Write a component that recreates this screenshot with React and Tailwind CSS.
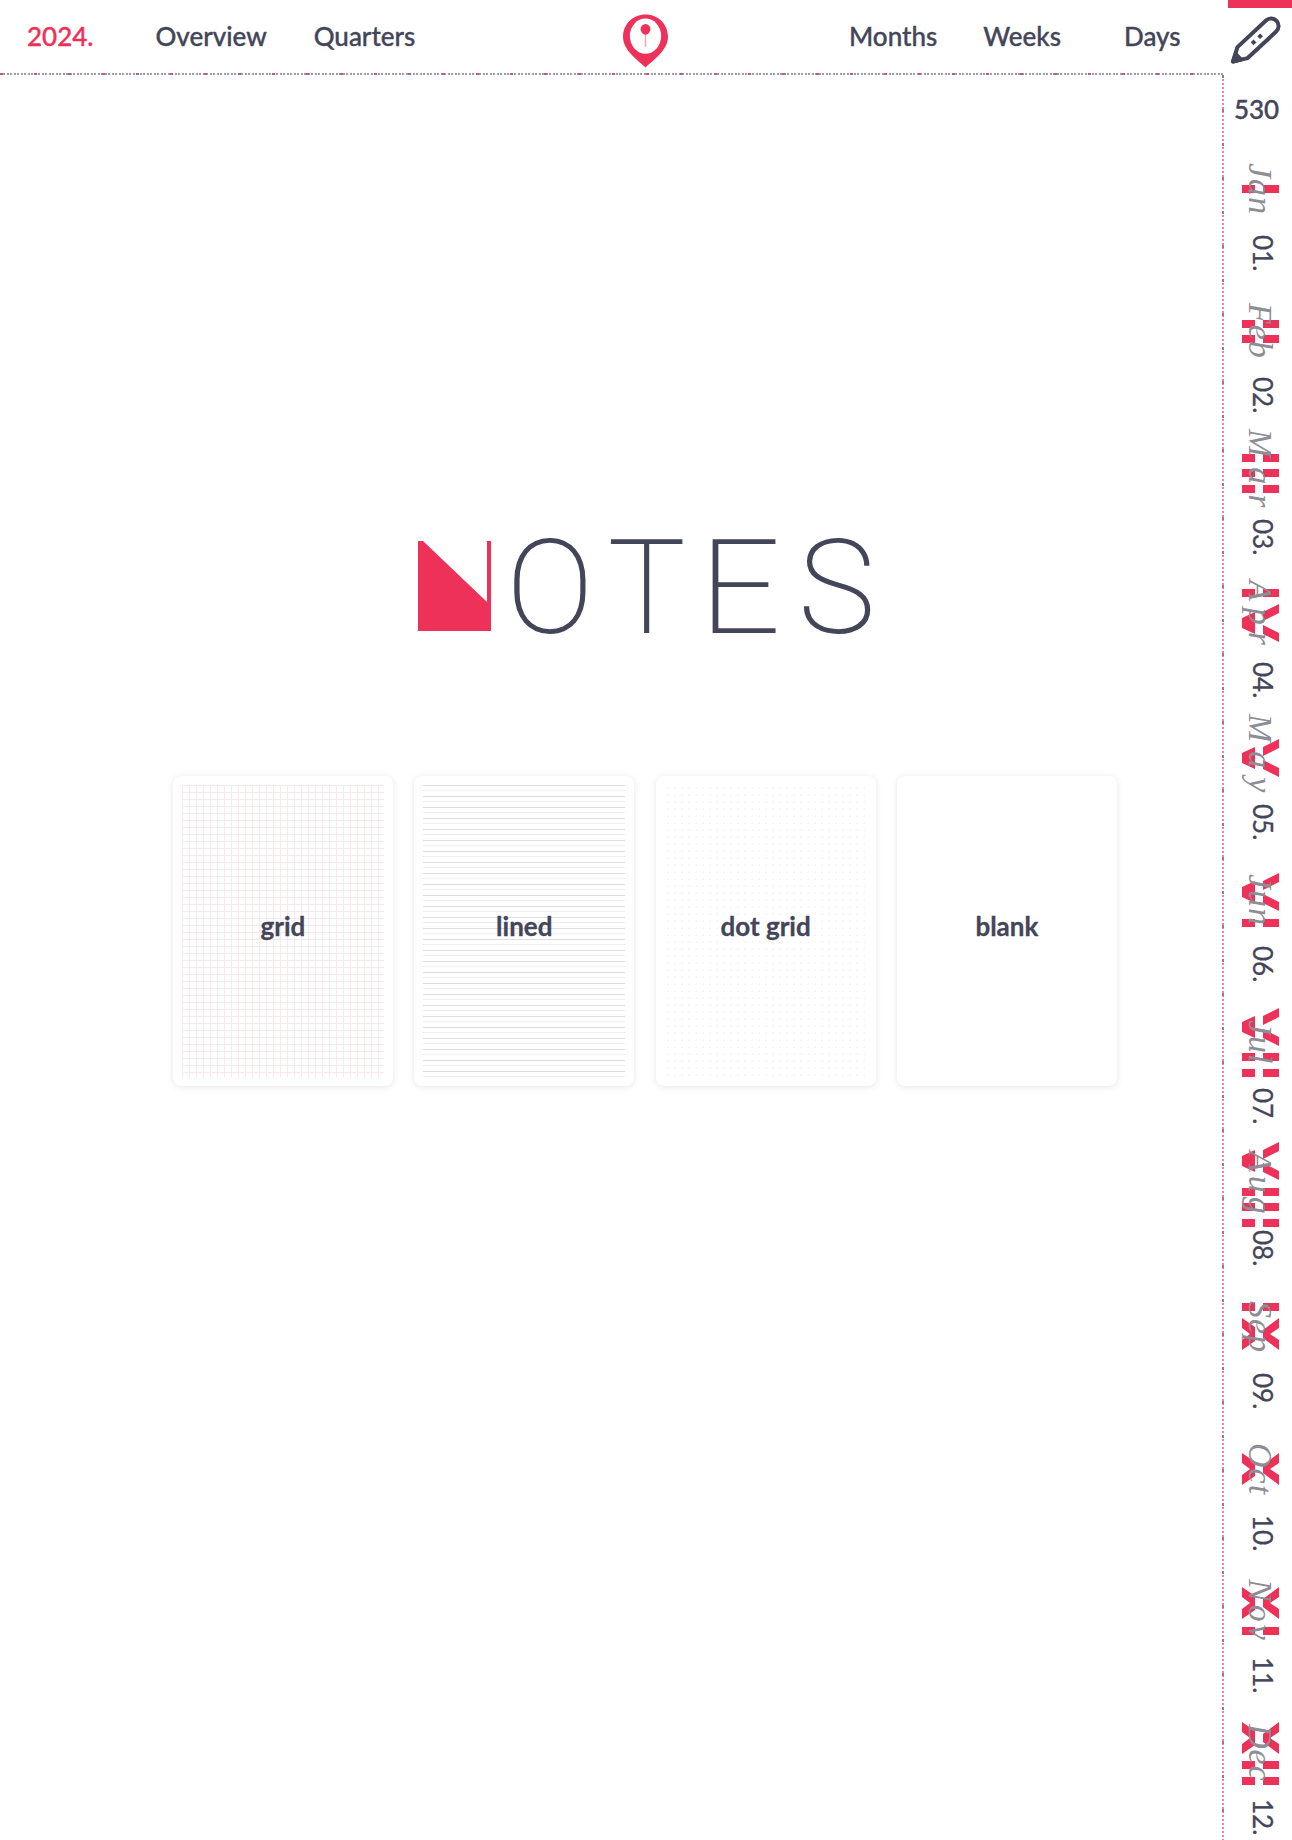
const dark = '#434559';

const months = [
  { name: 'Jan', num: '01.', roman: ['I'], script: 'tracking-[1px]' },
  { name: 'Feb', num: '02.', roman: ['I', 'I'], script: 'tracking-[1px]' },
  { name: 'Mar', num: '03.', roman: ['I', 'I', 'I'], script: 'tracking-[10px]' },
  { name: 'Apr', num: '04.', roman: ['I', 'V'], script: 'tracking-[7px]' },
  { name: 'May', num: '05.', roman: ['V'], script: 'tracking-[9px]' },
  { name: 'Jun', num: '06.', roman: ['V', 'I'], script: 'tracking-[1px]' },
  { name: 'Jul', num: '07.', roman: ['V', 'I', 'I'], script: 'tracking-[1px]' },
  { name: 'Aug', num: '08.', roman: ['V', 'I', 'I', 'I'], script: 'tracking-[4px]' },
  { name: 'Sep', num: '09.', roman: ['I', 'X'], script: 'tracking-[1px]' },
  { name: 'Oct', num: '10.', roman: ['X'], script: 'tracking-[1px]' },
  { name: 'Nov', num: '11.', roman: ['X', 'I'], script: 'tracking-[3px]' },
  { name: 'Dec', num: '12.', roman: ['X', 'I', 'I'], script: 'tracking-[1px]' },
];

function RomanPiece({ kind }) {
  if (kind === 'I') {
    return (
      <svg width="37" height="8" viewBox="0 0 37 8" className="block fill-[#ee3158]">
        <rect x="0" y="0" width="13" height="8" />
        <rect x="21" y="0" width="16" height="8" />
      </svg>
    );
  }
  if (kind === 'V') {
    return (
      <svg width="37" height="38" viewBox="0 0 37 38" className="block fill-[#ee3158]">
        <polygon points="21,8 37,0 37,9 21,17" />
        <polygon points="21,21 37,29 37,38 21,30" />
        <polygon points="0,14 13,8 13,30 0,24" />
      </svg>
    );
  }
  return (
    <svg width="37" height="32" viewBox="0 0 37 32" className="block fill-[#ee3158]">
      <polygon points="0,0 13,9 13,23 0,32 0,22 8,16 0,10" />
      <polygon points="37,0 21,12 21,20 37,32 37,22 28,16 37,10" />
    </svg>
  );
}

function MonthRow({ m }) {
  return (
    <div className="h-[142.2px] flex flex-col items-center pl-[4px]">
      <div className="relative mt-[22.5px] h-[100px] w-full flex items-center justify-center">
        <div className="flex flex-col gap-[7.5px]">
          {m.roman.map((r, i) => <RomanPiece key={i} kind={r} />)}
        </div>
        <span className={`absolute inset-0 flex items-center justify-center [writing-mode:vertical-rl] italic font-['Liberation_Serif',serif] text-[34px] leading-none text-[#8d8d95] ${m.script}`}>
          {m.name}
        </span>
      </div>
      <div className="h-[18px] mt-[8.5px] ml-[6px] flex items-center justify-center text-[26px] leading-none text-[#434559] [-webkit-text-stroke-width:0.3px] [writing-mode:vertical-rl]">
        {m.num}
      </div>
    </div>
  );
}

function Pin() {
  return (
    <svg width="45" height="54" viewBox="0 0 46 54" className="block">
      <path d="M23 0C36 0 46 10 46 23C46 36 31 47 23 54C15 47 0 36 0 23C0 10 10 0 23 0Z" fill="#ee3158" />
      <ellipse cx="23" cy="22" rx="16" ry="18" fill="#fff" />
      <line x1="23" y1="18" x2="23" y2="33" stroke="#f6a3b5" strokeWidth="1.5" />
      <ellipse cx="23" cy="15" rx="5" ry="5.5" fill="#ee3158" />
    </svg>
  );
}

function Pencil() {
  return (
    <svg width="50" height="47" viewBox="0 0 50 47" className="block overflow-visible">
      <g transform="rotate(-43 25 24)" fill="none" stroke={dark} strokeWidth="4" strokeLinejoin="round">
        <path d="M-5 24L8 16.5H47a7.5 7.5 0 0 1 0 15H8Z" />
        <path d="M-5 24L2 20.2V27.8Z" fill={dark} />
        <line x1="21" y1="24" x2="25" y2="24" strokeWidth="4" />
        <line x1="30" y1="24" x2="34" y2="24" strokeWidth="4" />
      </g>
    </svg>
  );
}

function Card({ label, pattern }) {
  return (
    <div className="relative w-[220px] h-[310px] rounded-lg bg-white shadow-[0_1px_6px_rgba(60,60,90,0.13)] flex items-center justify-center">
      <div className={`absolute inset-[9px] ${pattern}`} />
      <span className="relative text-[26px] font-bold text-[#434559] [-webkit-text-stroke-width:0.3px] -mt-[9px]">{label}</span>
    </div>
  );
}

export default function App() {
  return (
    <div className="flex w-[1292px] h-[1840px] overflow-hidden bg-white font-['Lato',sans-serif] text-[#434559]">
      <div className="w-[1224px] flex flex-col">
        <header className="shrink-0">
          <div className="h-[73px] grid grid-cols-[623px_45px_1fr] items-center text-[26px] font-medium [-webkit-text-stroke-width:0.35px]">
            <div className="flex items-center pl-[27px]">
              <span className="text-[#ee3158]">2024.</span>
              <span className="ml-[62px]">Overview</span>
              <span className="ml-[47px]">Quarters</span>
            </div>
            <div className="mt-[8px]"><Pin /></div>
            <div className="flex items-center">
              <span className="ml-[181px]">Months</span>
              <span className="ml-[46px]">Weeks</span>
              <span className="ml-[63px]">Days</span>
            </div>
          </div>
          <div className="h-[2px] bg-[repeating-linear-gradient(90deg,#c05a78_0_3px,transparent_3px_34px),repeating-linear-gradient(90deg,#9d9da4_0_2px,transparent_2px_3.5px)]" />
        </header>
        <main className="flex-1 flex">
          <div className="flex-1 flex flex-col pl-[173px]">
            <div className="flex items-center ml-[245px] mt-[466px] h-[94px]">
              <svg width="73" height="90" viewBox="0 0 73 90" className="block fill-[#ee3158] shrink-0 -mt-[4px]">
                <polygon points="0,0 5,0 69,61 69,0 73,0 73,90 0,90" />
              </svg>
              <span className="ml-[15px] font-['Roboto',sans-serif] font-extralight text-[131px] leading-none tracking-[16px] text-[#434559]">
                <span className="-mr-[2.4px]">O</span>
                <span className="-mr-[2.4px]">T</span>
                <span className="inline-block origin-left scale-x-[1.1] mr-[8px]">E</span>
                <span>S</span>
              </span>
            </div>
            <div className="flex gap-[21.3px] mt-[141px]">
              <Card label="grid" pattern="bg-[linear-gradient(#f9e9ed_1px,transparent_1px),linear-gradient(90deg,#f9e9ed_1px,transparent_1px)] bg-[size:7px_7px]" />
              <Card label="lined" pattern="bg-[linear-gradient(#dedee1_1px,transparent_1px,transparent_5.5px,#efeff1_5.5px,#efeff1_6.5px,transparent_6.5px)] bg-[size:100%_11px]" />
              <Card label="dot grid" pattern="bg-[radial-gradient(#f5f5f7_1px,transparent_1px)] bg-[size:7px_7px]" />
              <Card label="blank" pattern="" />
            </div>
          </div>
          <div className="w-[2px] bg-[repeating-linear-gradient(to_bottom,#85858d_0_3px,transparent_3px_34px),repeating-linear-gradient(to_bottom,#f283a0_0_2px,transparent_2px_4px)]" />
        </main>
      </div>
      <aside className="w-[68px] flex flex-col">
        <div className="h-[8px] ml-[4px] shrink-0 bg-[#ee3158]" />
        <div className="h-[50px] shrink-0 mt-[9px] ml-[6px]"><Pencil /></div>
        <div className="mt-[29px] h-[26px] shrink-0 text-center text-[26px] leading-[26px] font-medium ml-[-3px] [-webkit-text-stroke-width:0.35px]">530</div>
        <div className="-mt-[2px]">
          {months.map(m => <MonthRow key={m.name} m={m} />)}
        </div>
      </aside>
    </div>
  );
}
